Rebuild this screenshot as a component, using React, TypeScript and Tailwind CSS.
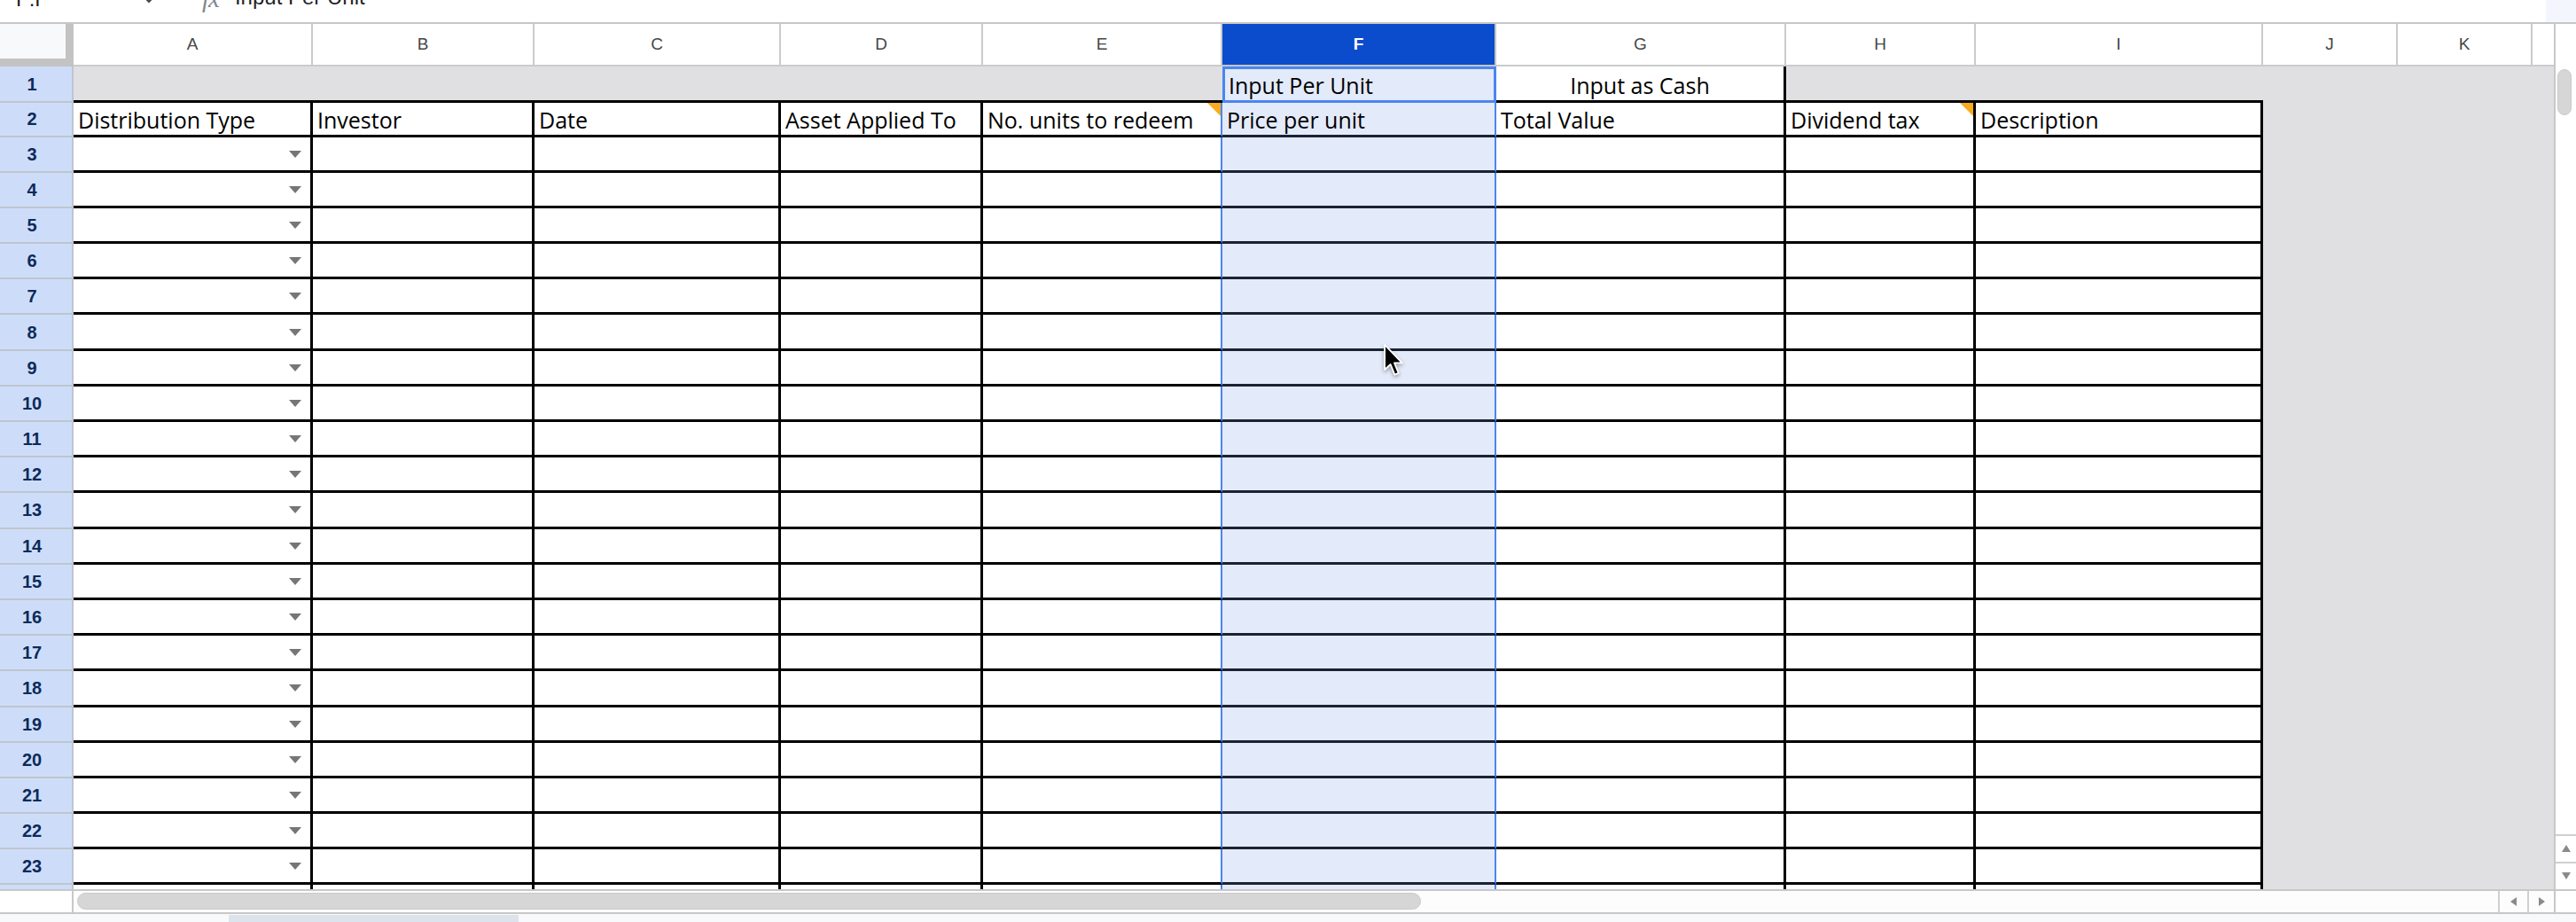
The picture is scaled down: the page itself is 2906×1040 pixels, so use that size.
import React from 'react';

const LETTERS = ['A', 'B', 'C', 'D', 'E', 'F', 'G', 'H', 'I', 'J', 'K'];
const ROW2 = [
  'Distribution Type',
  'Investor',
  'Date',
  'Asset Applied To',
  'No. units to redeem',
  'Price per unit',
  'Total Value',
  'Dividend tax',
  'Description',
];

const CELL_FONT = { fontFamily: '"Open Sans", "Liberation Sans", sans-serif' } as const;

function NoteMark() {
  return (
    <span className="absolute top-0 right-0 w-0 h-0 border-t-[15px] border-t-[#f8ab1f] border-l-[15px] border-l-transparent" />
  );
}

function DropArrow() {
  return (
    <span className="w-0 h-0 border-l-[7px] border-r-[7px] border-t-[8px] border-l-transparent border-r-transparent border-t-[#767676]" />
  );
}

function HeaderRow() {
  return (
    <>
      <div className="bg-[#f8f9fa] border-r-[9px] border-b-[9px] border-[#c3c3c3]" />
      {LETTERS.map((l) =>
        l === 'F' ? (
          <div
            key={l}
            className="bg-[#0b4ccc] border-r-2 border-b-2 border-r-[#c4c7c5] border-b-[#c4c7c5] flex items-center justify-center text-white font-bold text-[19px] font-['Liberation_Sans',sans-serif]"
          >
            {l}
          </div>
        ) : (
          <div
            key={l}
            className="bg-white border-r-2 border-b-2 border-[#c9cbcc] flex items-center justify-center text-[#444746] text-[19px] font-['Liberation_Sans',sans-serif]"
          >
            {l}
          </div>
        )
      )}
      <div className="bg-white border-b-2 border-[#c9cbcc]" />
    </>
  );
}

function RowHeader({ r }: { r: number }) {
  if (r === 24) {
    return <div className="bg-[#cdddf9] border-r-2 border-[#bfc5cf]" />;
  }
  return (
    <div className="bg-[#cdddf9] border-r-2 border-b-2 border-[#bfc5cf] flex items-center justify-center pr-[9px] font-bold text-[20px] text-[#0d2a5a] font-['Liberation_Sans',sans-serif]">
      {r}
    </div>
  );
}

function Row1() {
  const cells: React.ReactNode[] = [];
  for (let c = 0; c < 12; c++) {
    if (c <= 4 || c === 7 || c === 8) {
      cells.push(<div key={c} className="bg-[#e0e0e2] border-b-[3px] border-black" />);
    } else if (c === 5) {
      cells.push(
        <div
          key={c}
          style={CELL_FONT}
          className="bg-[#e3eafa] border-[3px] border-[#4a86f0] flex items-end pl-[4px] text-[25px] leading-[34px] text-black whitespace-nowrap overflow-hidden"
        >
          Input Per Unit
        </div>
      );
    } else if (c === 6) {
      cells.push(
        <div
          key={c}
          style={CELL_FONT}
          className="bg-white border-r-[3px] border-b-[3px] border-black flex items-end justify-center text-[25px] leading-[34px] text-black whitespace-nowrap overflow-hidden"
        >
          Input as Cash
        </div>
      );
    } else {
      cells.push(<div key={c} className="bg-[#e0e0e2]" />);
    }
  }
  return <>{cells}</>;
}

function DataRow({ r }: { r: number }) {
  const last = r === 24;
  const cells: React.ReactNode[] = [];
  for (let c = 0; c < 12; c++) {
    const text = r === 2 && c < 9 ? ROW2[c] : '';
    const note = r === 2 && (c === 4 || c === 7);
    const arrow = c === 0 && r >= 3 && r <= 23;
    if (c >= 9) {
      cells.push(<div key={c} className="bg-[#e0e0e2]" />);
      continue;
    }
    let cls = '';
    if (c === 4) {
      cls = last
        ? 'bg-white border-r-2 border-r-[#4a86f0]'
        : 'bg-white border-b-[3px] border-b-black border-r-2 border-r-[#4a86f0]';
    } else if (c === 5) {
      cls = last
        ? 'bg-[#e3eafa] border-r-2 border-r-[#4a86f0]'
        : 'bg-[#e3eafa] border-b-[3px] border-b-[#1b2233] border-r-2 border-r-[#4a86f0]';
    } else {
      cls = last ? 'bg-white border-r-[3px] border-black' : 'bg-white border-r-[3px] border-b-[3px] border-black';
    }
    cells.push(
      <div
        key={c}
        style={CELL_FONT}
        className={
          cls +
          ' relative flex text-[25px] leading-[34px] text-black whitespace-nowrap overflow-hidden ' +
          (arrow ? 'items-center justify-end pr-[10px] pt-[1px]' : 'items-end pl-[5px]')
        }
      >
        {text}
        {arrow && <DropArrow />}
        {note && <NoteMark />}
      </div>
    );
  }
  return <>{cells}</>;
}

function Cursor() {
  return (
    <svg
      className="absolute left-[1560px] top-[387px] drop-shadow-[0_2px_2px_rgba(0,0,0,0.35)]"
      width="26"
      height="40"
      viewBox="0 0 14 22"
    >
      <path
        d="M1 1 L1 16.5 L4.6 13.2 L7.2 19.6 L9.6 18.6 L7 12.3 L11.8 12.3 Z"
        fill="#000"
        stroke="#fff"
        strokeWidth="1"
        strokeLinejoin="round"
      />
    </svg>
  );
}

export default function App() {
  const rows = Array.from({ length: 23 }, (_, i) => i + 2);
  return (
    <div className="relative w-[2906px] h-[1040px] overflow-hidden bg-white select-none">
      {/* Formula bar (clipped at the top) */}
      <div className="h-[27px] border-b-2 border-[#c7c7c7] flex items-start overflow-hidden bg-white">
        <div className="ml-[18px] -mt-[13px] text-[24px] leading-[24px] text-[#1f1f1f] font-['Liberation_Sans',sans-serif]">
          F:F
        </div>
        <svg className="ml-[108px] -mt-[4px]" width="12" height="8" viewBox="0 0 12 8">
          <path d="M1 1 L6 6 L11 1" fill="none" stroke="#444746" strokeWidth="2" />
        </svg>
        <div className="ml-[54px] -mt-[15px] text-[29px] leading-[27px] italic text-[#80868b] font-['Liberation_Serif',serif] tracking-[-1px]">
          fx
        </div>
        <div className="ml-[18px] -mt-[15px] text-[24px] leading-[24px] text-[#1f1f1f] font-['Liberation_Sans',sans-serif] whitespace-nowrap">
          Input Per Unit
        </div>
        <div className="flex-1" />
        <div className="w-[34px] self-stretch bg-[#f3f6fc]" />
      </div>

      {/* Sheet area */}
      <div className="flex">
        <div className="grid grid-cols-[83px_270px_250px_278px_228px_270px_309px_327px_214px_324px_152px_152px_24px] grid-rows-[48px_41px_38.5px_repeat(21,40.2px)_4.3px] w-[2881px]">
          <HeaderRow />
          <RowHeader r={1} />
          <Row1 />
          {rows.map((r) => (
            <React.Fragment key={r}>
              <RowHeader r={r} />
              <DataRow r={r} />
            </React.Fragment>
          ))}
        </div>
        {/* Vertical scrollbar */}
        <div className="w-[25px] border-l-2 border-[#c8c8c8] bg-white flex flex-col">
          <div className="mt-[51px] ml-[2px] w-[16px] h-[52px] rounded-full bg-[#d6d6d6] border border-[#cacaca]" />
          <div className="flex-1" />
          <div className="h-[31px] border-t-2 border-[#d0d0d0] flex items-center justify-center">
            <span className="w-0 h-0 border-l-[5px] border-r-[5px] border-b-[8px] border-l-transparent border-r-transparent border-b-[#8a8a8a]" />
          </div>
          <div className="h-[31px] border-t-2 border-[#d0d0d0] flex items-center justify-center">
            <span className="w-0 h-0 border-l-[5px] border-r-[5px] border-t-[8px] border-l-transparent border-r-transparent border-t-[#8a8a8a]" />
          </div>
        </div>
      </div>

      {/* Horizontal scrollbar */}
      <div className="h-[26px] border-t-2 border-[#c8c8c8] flex bg-[#fdfdfd]">
        <div className="w-[83px] border-r-2 border-[#c8c8c8] bg-white" />
        <div className="ml-[4px] mt-[2px] w-[1516px] h-[19px] rounded-full bg-[#d6d6d6] border border-[#c9c9c9]" />
        <div className="flex-1" />
        <div className="w-[33px] border-l-2 border-[#d0d0d0] flex items-center justify-center">
          <span className="w-0 h-0 border-t-[5px] border-b-[5px] border-r-[7px] border-t-transparent border-b-transparent border-r-[#8a8a8a]" />
        </div>
        <div className="w-[30px] border-l-2 border-[#d0d0d0] flex items-center justify-center">
          <span className="w-0 h-0 border-t-[5px] border-b-[5px] border-l-[7px] border-t-transparent border-b-transparent border-l-[#8a8a8a]" />
        </div>
        <div className="w-[25px] border-l-2 border-[#c8c8c8] bg-white" />
      </div>

      {/* Sheet tab strip (clipped) */}
      <div className="h-[11px] border-t-2 border-[#c8c8c8] bg-[#f8f9fb] flex">
        <div className="ml-[258px] mt-[1px] w-[327px] bg-[#dde3eb]" />
      </div>

      <Cursor />
    </div>
  );
}
